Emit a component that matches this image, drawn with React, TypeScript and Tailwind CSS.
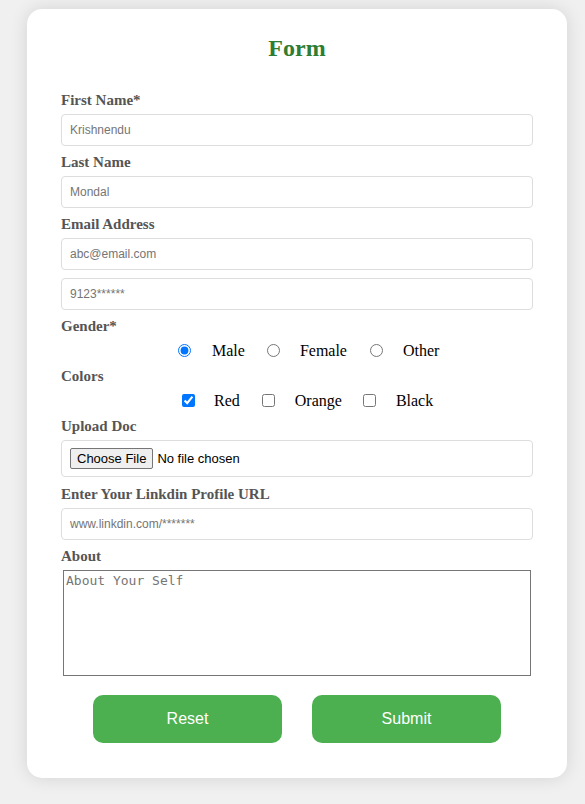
const Label = ({ children }: { children: React.ReactNode }) => (
    <label className="block text-[15px] leading-[18px] font-bold text-[#555] mb-[5px]">{children}</label>
);

const TextInput = ({ placeholder, type = 'text' }: { placeholder: string; type?: string }) => (
    <input
        type={type}
        placeholder={placeholder}
        className="block w-full h-8 mb-[7px] px-2 border border-[#ddd] rounded bg-white text-[12px] font-['Liberation_Sans',Arial,sans-serif] placeholder:text-[#757575] outline-none"
    />
);

export default function App() {
    return (
        <div className="min-h-screen w-full bg-[#f0f0f0] pt-[9px] pb-[27px] font-['Liberation_Serif','Times_New_Roman',serif]">
            <div className="ml-[27px] w-[540px] bg-white rounded-[15px] shadow-[0_0_18px_rgba(0,0,0,0.12)] px-[34px] pt-[25px] pb-[35px]">
                <h2 className="text-center text-[24px] leading-[28px] font-bold text-[#2e7d32] mb-[29px]">Form</h2>

                <form onSubmit={(e) => e.preventDefault()}>
                    <Label>First Name*</Label>
                    <TextInput placeholder="Krishnendu" />

                    <Label>Last Name</Label>
                    <TextInput placeholder="Mondal" />

                    <Label>Email Address</Label>
                    <div className="mb-[8px]">
                        <TextInput placeholder="abc@email.com" type="email" />
                    </div>
                    <TextInput placeholder="9123******" type="tel" />

                    <Label>Gender*</Label>
                    <div className="flex items-center h-[20px] mb-[7px] pl-[117px] text-[16px] text-black">
                        <input type="radio" name="gender" defaultChecked className="m-0 w-[13px] h-[13px]" />
                        <span className="ml-[21px] mr-[22px] pt-[2px]">Male</span>
                        <input type="radio" name="gender" className="m-0 w-[13px] h-[13px]" />
                        <span className="ml-[20px] mr-[23px] pt-[2px]">Female</span>
                        <input type="radio" name="gender" className="m-0 w-[13px] h-[13px]" />
                        <span className="ml-[20px] pt-[2px]">Other</span>
                    </div>

                    <Label>Colors</Label>
                    <div className="flex items-center h-[20px] mb-[7px] pl-[121px] text-[16px] text-black">
                        <input type="checkbox" defaultChecked className="m-0 w-[13px] h-[13px]" />
                        <span className="ml-[19px] mr-[22px] pt-[2px]">Red</span>
                        <input type="checkbox" className="m-0 w-[13px] h-[13px]" />
                        <span className="ml-[20px] mr-[21px] pt-[2px]">Orange</span>
                        <input type="checkbox" className="m-0 w-[13px] h-[13px]" />
                        <span className="ml-[20px] pt-[2px]">Black</span>
                    </div>

                    <Label>Upload Doc</Label>
                    <div className="flex items-center h-[37px] mb-[8px] px-2 border border-[#ddd] rounded">
                        <input
                            type="file"
                            className="text-[13px] font-['Liberation_Sans',Arial,sans-serif] text-black file:h-[21px] file:px-[6px] file:mr-[4px] file:border file:border-[#767676] file:rounded-[2px] file:bg-[#efefef] file:text-black"
                        />
                    </div>

                    <Label>Enter Your Linkdin Profile URL</Label>
                    <TextInput placeholder="www.linkdin.com/*******" type="url" />

                    <Label>About</Label>
                    <textarea
                        placeholder="About Your Self"
                        className="block mx-[2px] w-[468px] h-[106px] p-[2px] border border-[#767676] text-[13px] leading-[16px] font-['DejaVu_Sans_Mono','Liberation_Mono',monospace] placeholder:text-[#757575] resize-none outline-none"
                    />

                    <div className="flex justify-center gap-[30px] mt-[19px]">
                        <button
                            type="reset"
                            className="w-[189px] h-12 rounded-[10px] bg-[#4caf50] text-white text-[16px] font-['Liberation_Sans',Arial,sans-serif]"
                        >
                            Reset
                        </button>
                        <button
                            type="submit"
                            className="w-[189px] h-12 rounded-[10px] bg-[#4caf50] text-white text-[16px] font-['Liberation_Sans',Arial,sans-serif]"
                        >
                            Submit
                        </button>
                    </div>
                </form>
            </div>
        </div>
    );
}
